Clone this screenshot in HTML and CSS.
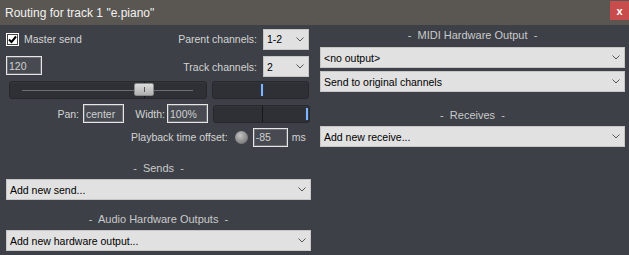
FILE: index.html
```html
<!DOCTYPE html>
<html lang="en">
<head>
    <meta charset="UTF-8">
    <title>Routing for track 1</title>
    <link rel="stylesheet" href="styles.css">
</head>
<body>
    <div class="window">
        <div class="titlebar">
            <span class="title">Routing for track 1 "e.piano"</span>
            <span class="close">x</span>
        </div>
        <div class="panel">
            <div class="col">
                <div class="row row-master">
                    <span class="checkbox">
                        <svg width="11" height="11" viewBox="0 0 11 11"><polyline points="2,5.5 4.5,8 9,2.5" fill="none" stroke="#000" stroke-width="2"/></svg>
                    </span>
                    <span class="label master-label">Master send</span>
                    <span class="label push">Parent channels:</span>
                    <div class="select small">1-2<svg class="chev" width="8" height="5" viewBox="0 0 8 5"><polyline points="0.5,0.5 4,4 7.5,0.5" fill="none" stroke="#555" stroke-width="1"/></svg></div>
                </div>
                <div class="row row-track">
                    <span class="field vol">120</span>
                    <span class="label push">Track channels:</span>
                    <div class="select small">2<svg class="chev" width="8" height="5" viewBox="0 0 8 5"><polyline points="0.5,0.5 4,4 7.5,0.5" fill="none" stroke="#555" stroke-width="1"/></svg></div>
                </div>
                <div class="row row-sliders">
                    <div class="slider volume">
                        <span class="rail"></span>
                        <span class="center-line vol-center"></span>
                        <span class="thumb"></span>
                    </div>
                    <div class="slider short">
                        <span class="mark mark-mid"></span>
                    </div>
                </div>
                <div class="row row-pan">
                    <span class="label cell pan-cell">Pan:</span>
                    <span class="field w41">center</span>
                    <span class="label cell width-cell">Width:</span>
                    <span class="field w41">100%</span>
                    <div class="slider short">
                        <span class="center-line"></span>
                        <span class="mark mark-end"></span>
                    </div>
                </div>
                <div class="row row-offset">
                    <span class="label">Playback time offset:</span>
                    <span class="knob"></span>
                    <span class="field offset">-85</span>
                    <span class="label ms">ms</span>
                </div>
                <div class="heading sends-heading">-&nbsp; Sends &nbsp;-</div>
                <div class="dropdown">Add new send...<svg class="chev" width="8" height="5" viewBox="0 0 8 5"><polyline points="0.5,0.5 4,4 7.5,0.5" fill="none" stroke="#555" stroke-width="1"/></svg></div>
                <div class="heading hw-heading">-&nbsp; Audio Hardware Outputs &nbsp;-</div>
                <div class="dropdown">Add new hardware output...<svg class="chev" width="8" height="5" viewBox="0 0 8 5"><polyline points="0.5,0.5 4,4 7.5,0.5" fill="none" stroke="#555" stroke-width="1"/></svg></div>
            </div>
            <div class="col">
                <div class="heading midi-heading">-&nbsp; MIDI Hardware Output &nbsp;-</div>
                <div class="dropdown midi-out">&lt;no output&gt;<svg class="chev" width="8" height="5" viewBox="0 0 8 5"><polyline points="0.5,0.5 4,4 7.5,0.5" fill="none" stroke="#555" stroke-width="1"/></svg></div>
                <div class="dropdown midi-ch">Send to original channels<svg class="chev" width="8" height="5" viewBox="0 0 8 5"><polyline points="0.5,0.5 4,4 7.5,0.5" fill="none" stroke="#555" stroke-width="1"/></svg></div>
                <div class="heading recv-heading">-&nbsp; Receives &nbsp;-</div>
                <div class="dropdown">Add new receive...<svg class="chev" width="8" height="5" viewBox="0 0 8 5"><polyline points="0.5,0.5 4,4 7.5,0.5" fill="none" stroke="#555" stroke-width="1"/></svg></div>
            </div>
        </div>
    </div>
</body>
</html>
```

FILE: styles.css
```css
body {
    margin: 0;
    font-family: "Liberation Sans", Arial, sans-serif;
    background-color: #3d4047;
}
.window {
    width: 629px;
    height: 255px;
    background-color: #3d4047;
    overflow: hidden;
}
.titlebar {
    height: 25px;
    background-color: #5a5753;
    display: flex;
    align-items: center;
    padding-left: 5px;
}
.title {
    color: #f2f2f2;
    font-size: 12px;
}
.close {
    margin-left: auto;
    align-self: flex-start;
    margin-top: 1px;
    width: 19px;
    height: 19px;
    background-color: #c84c4c;
    color: #fff;
    font-size: 11px;
    font-weight: bold;
    display: flex;
    align-items: center;
    justify-content: center;
}
.panel {
    display: flex;
    gap: 9px;
    padding: 0 4px 0 6px;
}
.col {
    width: 305px;
    display: flex;
    flex-direction: column;
}
.row {
    display: flex;
    align-items: center;
}
.label {
    color: #d4d4d4;
    font-size: 10.5px;
    white-space: nowrap;
}
.push {
    margin-left: auto;
    margin-right: 6px;
}
.row-master {
    margin-top: 3px;
    height: 22px;
}
.checkbox {
    width: 13px;
    height: 13px;
    box-sizing: border-box;
    background-color: #fff;
    border: 1px solid #fff;
    box-shadow: inset 0 0 0 1px #444;
    display: flex;
    align-items: center;
    justify-content: center;
}
.master-label {
    margin-left: 5px;
}
.select {
    height: 21px;
    box-sizing: border-box;
    background-color: #e1e1e1;
    border: 1px solid #c6c6c6;
    display: flex;
    align-items: center;
    padding-left: 3px;
    font-size: 10.5px;
    color: #000;
}
.small {
    width: 46px;
    margin-right: 2px;
}
.chev {
    margin-left: auto;
    margin-right: 4px;
}
.row-track {
    margin-top: 6px;
    height: 21px;
}
.field {
    height: 19px;
    box-sizing: border-box;
    border: 1px solid #e6e6e6;
    box-shadow: inset 0 0 0 1px #6a6d72;
    background-color: #474a50;
    color: #d0d0d0;
    font-size: 10.5px;
    padding-left: 2px;
    display: flex;
    align-items: center;
}
.vol {
    width: 36px;
    margin-top: -2px;
}
.row-sliders {
    margin-top: 4px;
    height: 18px;
}
.slider {
    position: relative;
    height: 18px;
    box-sizing: border-box;
    background-color: #2e3035;
    border: 1px solid #26282c;
    border-radius: 3px;
    box-shadow: inset 0 1px 0 #34363b;
}
.volume {
    width: 198px;
    margin-left: 3px;
}
.short {
    width: 97px;
    margin-left: 5px;
}
.rail {
    position: absolute;
    left: 12px;
    right: 13px;
    top: 8px;
    height: 1px;
    background-color: #6c6e73;
}
.center-line {
    position: absolute;
    left: 48px;
    top: 0;
    bottom: 0;
    width: 1px;
    background-color: #16171a;
}
.vol-center {
    left: 134px;
}
.thumb {
    position: absolute;
    left: 124px;
    top: 1px;
    width: 20px;
    height: 13px;
    border-radius: 2px;
    background: linear-gradient(#dcdcdc, #b0b0b0);
    border: 1px solid #8a8a8a;
    box-sizing: border-box;
}
.thumb::after {
    content: "";
    position: absolute;
    left: 9px;
    top: 3px;
    width: 1px;
    height: 5px;
    background-color: #555;
}
.mark {
    position: absolute;
    top: 2px;
    width: 2px;
    height: 12px;
    background-color: #7fb4ff;
    box-shadow: 0 0 1px #3b6fc4;
}
.mark-mid {
    left: 48px;
}
.mark-end {
    left: 92px;
}
.row-pan {
    margin-top: 5px;
    height: 19px;
}
.cell {
    text-align: right;
    box-sizing: border-box;
}
.pan-cell {
    width: 77px;
    padding-right: 4px;
}
.width-cell {
    width: 43px;
    padding-right: 2px;
}
.w41 {
    width: 41px;
}
.row-offset {
    margin-top: 5px;
    height: 18px;
    padding-left: 125px;
}
.knob {
    width: 13px;
    height: 13px;
    margin-left: 7px;
    border-radius: 50%;
    background: radial-gradient(circle at 40% 35%, #c4c4c4, #7d7d7d 70%, #5d5d5d);
}
.offset {
    width: 35px;
    margin-left: 5px;
}
.ms {
    margin-left: 4px;
}
.heading {
    height: 14px;
    line-height: 14px;
    text-align: center;
    color: #cacaca;
    font-size: 11px;
}
.sends-heading {
    margin-top: 15px;
}
.hw-heading {
    margin-top: 12px;
}
.dropdown {
    height: 21px;
    margin-top: 4px;
    box-sizing: border-box;
    background-color: #e1e1e1;
    border: 1px solid #c6c6c6;
    display: flex;
    align-items: center;
    padding-left: 3px;
    font-size: 10.5px;
    color: #000;
}
.midi-heading {
    margin-top: 3px;
}
.midi-out {
    margin-top: 5px;
}
.midi-ch {
    margin-top: 3px;
}
.recv-heading {
    margin-top: 16px;
}
```
